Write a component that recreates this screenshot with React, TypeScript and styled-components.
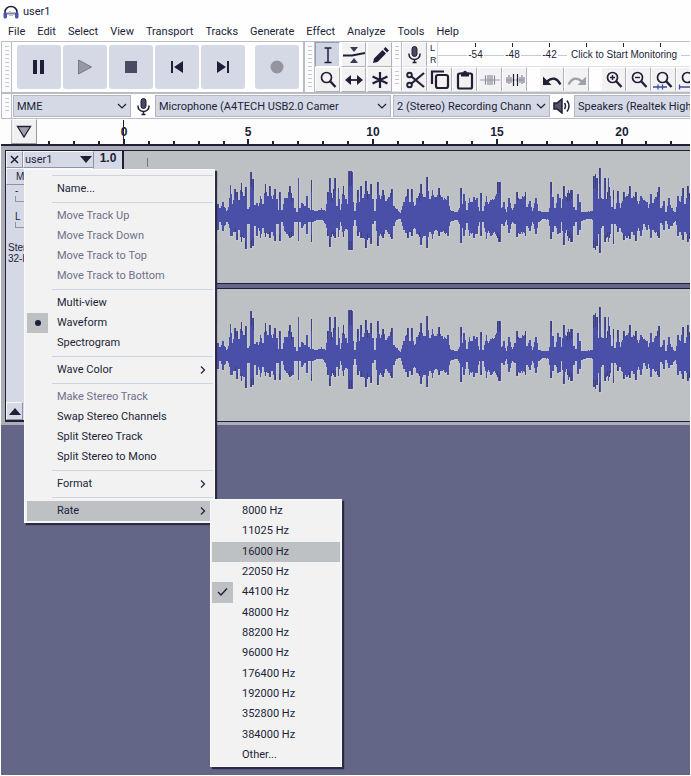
import React from "react";
import styled, { createGlobalStyle, css } from "styled-components";

const ink = "#211f38";
const slate = "#646687";
const mist = "#d5d9e6";
const line = "#b9bdc3";
const waveBlue = "#4a4fa8";
const ui = `Roboto, "Open Sans", sans-serif`;
const arial = `"Liberation Sans", Arial, sans-serif`;

const GlobalStyle = createGlobalStyle`
  * { box-sizing: border-box; }
  html, body, #root { height: 100%; }
  body { margin: 0; background: #fefefe; color: ${ink}; font: 11px/16px ${ui}; overflow: hidden; }
  button, select { font: inherit; color: inherit; margin: 0; padding: 0; border: 0; background: none; border-radius: 0; }
  svg { display: block; flex: none; }
`;

const Window = styled.div`
  position: relative;
  min-height: 100vh;
  display: flex;
  flex-direction: column;
  padding: 0 1px 1px;
  overflow: hidden;
`;

const TitleBar = styled.header`
  display: flex;
  align-items: center;
  gap: 4px;
  height: 23px;
  padding: 1px 0 0 2px;
`;

const MenuBar = styled.nav`
  display: flex;
  align-items: center;
  gap: 12px;
  height: 18px;
  padding-left: 7px;
`;

const MenuButton = styled.button`
  white-space: nowrap;
`;

const Dock = styled.div`
  display: flex;
  height: 53px;
  border-top: 1px solid ${line};
  border-bottom: 2px solid ${line};
  border-left: 1px solid ${line};
  overflow: hidden;
`;

const Grip = styled.div`
  flex: 0 0 10px;
  border-right: 1px solid ${line};
  background: repeating-linear-gradient(#c3c7d6 0 1px, #fcfcfd 1px 4px) 3px 4px / 4px calc(100% - 8px) no-repeat #fcfcfd;
`;

const Transport = styled.div`
  flex: none;
  display: flex;
  align-items: center;
  gap: 2px;
  padding: 0 4px 0 5px;
  border-right: 2px solid ${line};
`;

const TransportButton = styled.button<{ $apart?: boolean }>`
  width: 44px;
  height: 44px;
  display: grid;
  place-items: center;
  background: ${mist};
  border-radius: 3px;
  margin-left: ${(p) => (p.$apart ? 8 : 0)}px;
`;

const ToolGrid = styled.div`
  flex: none;
  display: grid;
  grid-template: 25px 25px / repeat(3, 25px);
  gap: 0 1px;
`;

const ToolButton = styled.button<{ $active?: boolean; $gap?: boolean }>`
  flex: 0 0 25px;
  height: 25px;
  display: grid;
  place-items: center;
  overflow: hidden;
  background: ${(p) => (p.$active ? "#d0d5e4" : "#f2f2f3")};
  border: 1px solid;
  border-color: ${(p) => (p.$active ? "#9a9db0 #fff #fff #9a9db0" : "#fff #aeb1b9 #aeb1b9 #fff")};
  margin-left: ${(p) => (p.$gap ? 12 : 0)}px;
`;

const RightTools = styled.div`
  flex: 1;
  min-width: 0;
  display: grid;
  grid-template-rows: 25px 25px;
`;

const ToolRow = styled.div`
  display: flex;
  min-width: 0;
  overflow: hidden;
  border-bottom: 1px solid #e0e2ea;
`;

const Channels = styled.div`
  flex: 0 0 11px;
  display: flex;
  flex-direction: column;
  justify-content: space-between;
  padding-left: 3px;
  font: 9px/12px ${arial};
  border-right: 1px solid ${mist};
`;

const Meter = styled.div`
  position: relative;
  flex: 1;
  min-width: 0;
  display: flex;
  padding-left: 19px;
  overflow: hidden;
  background: linear-gradient(#c5cad8, #c5cad8) 0 13px / 100% 1px no-repeat;
  font: 10px/12px ${arial};
`;

const MeterMark = styled.div`
  flex: 0 0 37px;
  display: flex;
  flex-direction: column;
  align-items: center;
  &::before { content: ""; width: 1px; height: 4px; background: ${ink}; margin: 1px 0 2px; }
  span { background: #fefefe; padding: 0 1px; }
`;

const MonitorButton = styled.button`
  position: absolute;
  left: 129px;
  top: 7px;
  padding: 0 4px;
  background: #fefefe;
  white-space: nowrap;
`;

const DeviceBar = styled.div`
  display: flex;
  align-items: center;
  height: 25px;
  border-left: 1px solid ${line};
  border-bottom: 1px solid ${line};
  overflow: hidden;
  ${Grip} { align-self: stretch; }
`;

const Combo = styled.label<{ $w: number }>`
  flex: 0 0 ${(p) => p.$w}px;
  display: grid;
  align-items: center;
  height: 22px;
  margin: 0 1px;
  background: ${mist};
  border: 1px solid #b2b6be;
  overflow: hidden;
  > * { grid-area: 1 / 1; }
  svg { justify-self: end; margin-right: 3px; pointer-events: none; }
`;

const ComboSelect = styled.select`
  appearance: none;
  min-width: 0;
  width: 100%;
  padding: 1px 16px 0 3px;
  line-height: 18px;
`;

const DeviceIcon = styled.div`
  flex: 0 0 22px;
  display: grid;
  place-items: center;
`;

const RulerBar = styled.div`
  display: flex;
  height: 27px;
  padding-left: 10px;
  border-bottom: 2px solid ${ink};
  overflow: hidden;
  background: #fdfdfd;
`;

const PinButton = styled.button`
  flex: 0 0 26px;
  display: grid;
  place-items: center;
  background: #f1f1f2;
  border: 1px solid;
  border-color: #fff #9a9ca5 #9a9ca5 ${line};
`;

const RulerScale = styled.svg`
  flex: 1;
  min-width: 0;
  height: 25px;
  font: bold 12px ${arial};
  text-anchor: middle;
  fill: ${ink};
`;

const Workspace = styled.main`
  flex: 1;
  background: ${slate};
`;

const Track = styled.section`
  display: flex;
  height: 279px;
  border: solid #acaeb7;
  border-width: 4px 0 3px 4px;
  box-shadow: inset 1px 1px ${ink}, inset 0 -2px ${ink};
  padding: 1px 0 2px 1px;
`;

const TrackPanel = styled.aside`
  flex: 0 0 118px;
  display: grid;
  grid-template: 17px 17px 26px 28px auto 1fr 18px / 17px 71px 1fr;
  background: ${mist};
  border-right: 2px solid ${ink};
  font: 10px/11px ${arial};
`;

const PanelButton = styled.button`
  display: flex;
  align-items: center;
  justify-content: center;
  border: 1px solid;
  border-color: #f6f7fa #8f92a6 #8f92a6 #f6f7fa;
`;

const NameButton = styled(PanelButton)`
  justify-content: space-between;
  padding: 0 1px;
  font: 11px/14px ${ui};
`;

const ScaleTop = styled.div`
  text-align: center;
  font: bold 12px/14px ${arial};
`;

const MuteButton = styled(PanelButton)`
  grid-column: 1 / 3;
  justify-content: flex-start;
  padding-left: 9px;
`;

const Gauge = styled.div`
  grid-column: 1 / -1;
  padding-left: 9px;
  &::after { content: ""; display: block; width: 60px; height: 5px; border: solid #8f92a6; border-width: 0 0 1px 1px; }
`;

const TrackInfo = styled.div`
  grid-column: 1 / -1;
  padding: 3px 0 0 2px;
`;

const CollapseButton = styled(PanelButton)`
  grid-row: 7;
`;

const WaveColumn = styled.div`
  flex: 1;
  min-width: 0;
  display: grid;
  grid-template-rows: 132px 6px 1fr;
`;

const WaveLane = styled.svg`
  width: 100%;
  height: 132px;
  background: #bdc1c4;
`;

const LaneDivider = styled.div`
  background: ${slate};
  border: solid ${ink};
  border-width: 1px 0;
`;

const popup = css`
  position: absolute;
  background: #f2f2f2;
  border: 1px solid #fafafa;
  box-shadow: 2px 2px 1px #2b2a45;
`;

const ContextMenu = styled.div`
  ${popup}
  left: 24px;
  top: 169px;
  width: 191px;
  padding: 2px 1px 1px 2px;
`;

const RateMenu = styled.div`
  ${popup}
  left: 210px;
  top: 499px;
  width: 132px;
  min-height: 268px;
  padding: 1px 1px;
  display: grid;
  grid-auto-rows: 1fr;
`;

const Item = styled.button<{ $hot?: boolean }>`
  width: 100%;
  min-height: 20px;
  display: grid;
  grid-template-columns: 21px 1fr 14px;
  column-gap: 9px;
  align-items: center;
  text-align: left;
  white-space: nowrap;
  background: ${(p) => (p.$hot ? "#bdc1c4" : "transparent")};
  &:disabled { color: #6f7089; }
`;

const Mark = styled.span<{ $on?: boolean }>`
  align-self: stretch;
  display: grid;
  place-items: center;
  background: ${(p) => (p.$on ? "#bdc1c4" : "transparent")};
`;

const Separator = styled.div`
  height: 7px;
  margin-left: 25px;
  padding-top: 3px;
  &::before { content: ""; display: block; height: 1px; background: #ced4e4; }
`;

const Chevron = ({ down = false }: { down?: boolean }) => (
  <svg width="10" height="10" viewBox="0 0 10 10" fill="none" stroke={ink} strokeWidth="1.2">
    <path d={down ? "M1 3l4 4 4-4" : "M2 1.500L5.500 5 2 8.500"} />
  </svg>
);

const Mic = ({ size = 19 }: { size?: number }) => (
  <svg width={size} height={size} viewBox="0 0 19 19" fill="none" stroke={ink} strokeWidth="1.5">
    <rect x="7" y="1.500" width="5" height="10" rx="2.5" fill="#4a4960" strokeWidth="1" />
    <path d="M4 8.500v1a5.500 5 0 0 0 11 0v-1M9.500 14.500V18M7.500 17.500h4" />
  </svg>
);

const Headphones = () => (
  <svg width="16" height="15" viewBox="0 0 16 15" fill="none">
    <path d="M2 9V7a6 5.500 0 0 1 12 0v2" stroke={ink} strokeWidth="1.600" />
    <path d="M4 8.500h8M5 7v3M7 6v5M9 7v4M11 7v3" stroke="#8a7f92" />
    <rect x="0.500" y="7" width="3.500" height="6.500" rx="1.500" fill="#4a55b5" />
    <rect x="12" y="7" width="3.500" height="6.500" rx="1.500" fill="#4a55b5" />
  </svg>
);

const Speaker = () => (
  <svg width="18" height="16" viewBox="0 0 18 16" fill="none" stroke={ink} strokeWidth="1.5">
    <path d="M1 5h3l5-4v14l-5-4H1z" fill="#55546a" />
    <path d="M11.500 5q2 3 0 6M14 2.500q4 5.500 0 11" />
  </svg>
);

const transportIcons: [string, React.ReactNode][] = [
  ["Pause", <path d="M6 5h4v14H6zM13 5h4v14h-4z" fill={ink} />],
  ["Play", <path d="M5.500 5l13 7-13 7z" fill="#9698a2" stroke="#77788a" />],
  ["Stop", <path d="M6 6h12v12H6z" fill="#4b4a63" />],
  ["Skip to Start", <path d="M6 6h2v12H6zM18 6v12L9 12z" fill={ink} />],
  ["Skip to End", <path d="M6 6v12l9-6zM16 6h2v12h-2z" fill={ink} />],
  ["Record", <circle cx="12" cy="12" r="6.500" fill="#94949e" />],
];

const Lens = ({ children }: { children?: React.ReactNode }) => (
  <g strokeWidth="1.700">
    <circle cx="9.500" cy="8.500" r="5" fill="none" />
    <path d="M13 12l5.500 6" strokeWidth="2.400" />
    {children}
  </g>
);

const toolIcons: [string, React.ReactNode][] = [
  ["Selection Tool", <path d="M7.500 4h7M11 4v14M7.500 18.500h7" strokeWidth="1.500" />],
  ["Envelope Tool", <g><path d="M0 11.500h9L22 9" strokeWidth="2" /><path d="M7 3h8l-4 5zM7 19h8l-4-5z" fill="#3c3b54" stroke="none" /></g>],
  ["Draw Tool", <path d="M4 19l1-4.500L13.500 6l3.500 3.500L8.500 18zM14.500 5l2-2 3.500 3.500-2 2z" fill={ink} stroke="none" />],
  ["Zoom Tool", <Lens />],
  ["Time Shift Tool", <g><path d="M5 11h12" strokeWidth="1.800" /><path d="M2 11l6-5v10zM20 11l-6-5v10z" fill={ink} stroke="none" /></g>],
  ["Multi-Tool", <path d="M11 3v16M3.500 7.500l15 7M18.500 7.500l-15 7" strokeWidth="2.200" />],
];

const editIcons: [string, React.ReactNode, boolean?][] = [
  ["Cut", <g strokeWidth="1.900"><circle cx="5.500" cy="6" r="2.300" /><circle cx="5.500" cy="16" r="2.300" /><path d="M7.500 7.500L20 18M7.500 14.500L20 4" strokeWidth="2.200" /></g>],
  ["Copy", <g strokeWidth="2.200"><path d="M15 2.500H3V15" /><rect x="7" y="6" width="12" height="13" rx="2" /></g>],
  ["Paste", <g strokeWidth="2.200"><rect x="4" y="4.500" width="14" height="15" rx="1.500" /><path d="M7 3.500h8v4H7z" fill={ink} stroke="none" /><circle cx="11" cy="3.500" r="1.800" fill={ink} stroke="none" /></g>],
  ["Trim Audio", <g stroke="#8b8d9e" strokeWidth="1.200"><path d="M1 11h20" stroke="#a9abb8" /><path d="M6.500 6.500v9M9 6v10M11 6v10M13 6v10M15.500 6.500v9" /></g>],
  ["Silence Audio", <g strokeWidth="1.200" stroke="#85879a"><path d="M2 11h18" stroke="#a9abb8" /><path d="M3 8v6M5 6v9M7 8v6M16 8v6M18 6v9M20 8v6" /><path d="M9.500 5v12M13.500 5v12" stroke={ink} /></g>],
  ["Undo", <g><path d="M6 12.500q8-7 13.500 3" strokeWidth="2.400" /><path d="M2 7.500V16h8.500z" fill={ink} stroke="none" /></g>, true],
  ["Redo", <g stroke="#a0a2ab"><path d="M16 12.500q-8-7-13.500 3" strokeWidth="2.400" /><path d="M20 7.500V16h-8.500z" fill="#a0a2ab" stroke="none" /></g>],
  ["Zoom In", <Lens><path d="M7 8.500h5M9.500 6v5" strokeWidth="1.400" /></Lens>, true],
  ["Zoom Out", <Lens><path d="M7 8.500h5" strokeWidth="1.400" /></Lens>],
  ["Fit Selection", <Lens><path d="M0 18h14M5 15.500v5M9.500 15.500v5" stroke="#3f4a9e" strokeWidth="1.300" /></Lens>],
  ["Fit Project", <Lens><path d="M1 18h20M1.500 15.500v5" stroke="#3f4a9e" strokeWidth="1.300" /></Lens>],
];

const ToolIcon = ({ children }: { children: React.ReactNode }) => (
  <svg width="22" height="22" viewBox="0 0 22 22" fill="none" stroke={ink} strokeWidth="2">{children}</svg>
);

const Tool = ({ name, icon, active, gap }: { name: string; icon: React.ReactNode; active?: boolean; gap?: boolean }) => (
  <ToolButton aria-label={name} $active={active} $gap={gap}><ToolIcon>{icon}</ToolIcon></ToolButton>
);

const Device = ({ label, value, w }: { label: string; value: string; w: number }) => (
  <Combo $w={w}>
    <ComboSelect aria-label={label}><option>{value}</option></ComboSelect>
    <Chevron down />
  </Combo>
);

/* Envelope samples: position in thirds of a pixel, peak above and below the centre line. */
const envelope = `0 0 0,14 6 6,18 30 27,23 12 14,28 8 6,38 14 15,48 5 6,54 9 8,60 31 20,66 12 20,74 27 16,80 24 24,86 16 14,93 33 26,100 20 22,106 29 33,
113 7 8,118 9 8,122 44 32,128 37 30,134 11 10,140 13 20,144 10 12,150 20 22,158 12 12,165 32 21,172 20 18,179 30 22,186 17 16,193 27 25,200 17 8,206 6 8,
209 24 25,214 6 6,222 18 15,230 18 18,238 30 22,247 18 20,254 8 6,260 4 6,264 38 25,268 8 6,275 13 12,283 10 8,290 20 18,296 8 6,300 6 6,303 36 26,307 6 6,
320 5 4,333 8 4,345 5 8,352 24 20,359 38 31,366 18 18,373 38 22,379 10 12,384 28 21,390 6 6,399 30 21,406 17 13,411 12 14,414 45 34,418 45 34,422 45 34,425 44 34,428 14 10,
434 5 4,443 26 20,447 14 16,451 30 22,458 18 22,467 35 32,475 22 22,482 32 28,488 17 8,494 5 5,502 34 30,510 17 18,518 26 22,526 15 14,535 19 18,545 27 23,
551 10 10,560 7 4,570 3 3,580 14 14,592 27 22,598 14 16,604 27 20,612 10 12,620 18 18,632 32 29,640 19 20,646 19 20,650 39 32,658 17 16,666 26 23,675 19 14,
685 28 20,695 19 16,705 17 18,712 20 20,720 6 6,740 4 4,747 8 8,752 28 27,756 12 12,761 22 20,770 6 7,777 18 20,783 14 18,790 19 22,800 18 18,807 5 6,
812 23 20,817 5 6,828 20 23,834 12 15,842 16 20,855 20 18,860 22 20,862 34 22,866 34 26,870 34 26,873 8 8,880 14 10,888 4 4,896 18 17,906 6 6,914 12 8,920 24 21,
928 17 18,936 20 18,945 24 20,950 9 10,959 15 15,966 5 6,976 18 18,986 5 6,1000 4 3,1016 4 4,1019 8 10,1022 34 23,1028 19 16,1034 8 10,1042 22 18,
1048 18 17,1052 8 6,1060 30 29,1068 19 14,1074 26 25,1085 26 26,1090 9 10,1096 6 6,1103 22 19,1109 14 14,1112 4 5,1140 5 3,1148 5 4,1151 40 32,
1155 42 34,1159 38 30,1162 17 18,1168 48 37,1173 18 12,1178 17 10,1183 38 26,1188 17 22,1194 38 26,1200 20 18,1204 9 8,1209 26 28,1214 7 8,1223 25 16,
1230 8 12,1240 24 24,1250 20 22,1258 30 23,1265 18 16,1276 24 25,1284 12 12,1292 20 20,1300 16 8,1310 14 14,1314 8 9,1321 22 22,1327 13 14,1335 19 17,
1346 29 22,1352 8 7,1360 15 14,1366 4 5,1376 18 13,1384 8 10,1395 4 5,1403 20 20,1410 14 16,1417 28 24,1424 12 16,1433 30 26,1440 24 26`
  .split(",")
  .map((s) => s.trim().split(" ").map(Number));

/* One column per pixel: a peak keeps its full height, the columns between peaks fall back to the body. */
const columns = Array.from({ length: 480 }, (_, px) => {
  const t = px * 3;
  const near = envelope.filter(([p]) => Math.abs(p - t) <= 2);
  const i = Math.max(1, envelope.findIndex(([p]) => p >= t));
  const [a, b] = [envelope[i - 1], envelope[i]];
  const k = Math.min(1, Math.max(0, (t - a[0]) / (b[0] - a[0])));
  const value = (n: number) =>
    near.length
      ? Math.max(...near.map((s) => s[n]))
      : Math.round((a[n] + (b[n] - a[n]) * k) * (px % 3 ? 0.88 : 1));
  return [px, value(1), value(2)];
});

const wavePath = (mid: number) =>
  columns.map(([px, up, down]) => `M${86 + px} ${mid - up}h1V${mid + down}h-1z`).join("");

const edgePath = (mid: number) =>
  columns
    .filter(([px, up]) => up > 22 && px % 2)
    .map(([px, up, down]) => `M${86 + px} ${mid - up}h1v${Math.round(up / 3)}h-1zM${86 + px} ${mid + down}h1v-${Math.round(down / 4)}h-1z`)
    .join("");

const Lane = ({ mid, label }: { mid: number; label: string }) => (
  <WaveLane role="img" aria-label={label} shapeRendering="crispEdges">
    <path d={wavePath(mid)} fill="none" stroke="#d0d3da" strokeWidth="1" opacity="0.5" />
    <path d={wavePath(mid)} fill={waveBlue} />
    <path d={edgePath(mid)} fill="#3a3963" opacity="0.7" />
    {mid < 66 && <path d="M23.500 7v9" stroke="#74768c" />}
  </WaveLane>
);

const Dot = () => <svg width="6" height="6"><circle cx="3" cy="3" r="3" fill={ink} /></svg>;
const Check = () => (
  <svg width="11" height="10" viewBox="0 0 11 10" fill="none" stroke={ink} strokeWidth="1.4"><path d="M1 5l3 3 6-6.500" /></svg>
);

type Entry = { text: string; off?: boolean; sub?: boolean; on?: boolean; hot?: boolean };
const trackMenu: Entry[][] = [
  [{ text: "Name..." }],
  ["Move Track Up", "Move Track Down", "Move Track to Top", "Move Track to Bottom"].map((text) => ({ text, off: true })),
  [{ text: "Multi-view" }, { text: "Waveform", on: true }, { text: "Spectrogram" }],
  [{ text: "Wave Color", sub: true }],
  [{ text: "Make Stereo Track", off: true }, { text: "Swap Stereo Channels" }, { text: "Split Stereo Track" }, { text: "Split Stereo to Mono" }],
  [{ text: "Format", sub: true }],
  [{ text: "Rate", sub: true, hot: true }],
];

const rates = [8000, 11025, 16000, 22050, 44100, 48000, 88200, 96000, 176400, 192000, 352800, 384000].map((r) => `${r} Hz`);

const MenuItem = ({ text, off, sub, on, hot, mark }: Entry & { mark?: React.ReactNode }) => (
  <Item role="menuitem" disabled={off} $hot={hot} aria-haspopup={sub ? "menu" : undefined}>
    <Mark $on={on}>{on && (mark ?? <Dot />)}</Mark>
    <span>{text}</span>
    {sub && <Chevron />}
  </Item>
);

const seconds = Array.from({ length: 26 }, (_, i) => i - 3);

export default function App() {
  return (
    <Window>
      <GlobalStyle />
      <TitleBar><Headphones /><span>user1</span></TitleBar>
      <MenuBar>
        {["File", "Edit", "Select", "View", "Transport", "Tracks", "Generate", "Effect", "Analyze", "Tools", "Help"].map((m) => (
          <MenuButton key={m}>{m}</MenuButton>
        ))}
      </MenuBar>
      <Dock>
        <Grip />
        <Transport>
          {transportIcons.map(([name, icon]) => (
            <TransportButton key={name} aria-label={name} $apart={name === "Record"}>
              <svg width="24" height="24" viewBox="0 0 24 24">{icon}</svg>
            </TransportButton>
          ))}
        </Transport>
        <Grip />
        <ToolGrid>
          {toolIcons.map(([name, icon], i) => <Tool key={name} name={name} icon={icon} active={i === 0} />)}
        </ToolGrid>
        <RightTools>
          <ToolRow>
            <Grip />
            <ToolButton aria-label="Record Meter"><Mic /></ToolButton>
            <Channels><span>L</span><span>R</span></Channels>
            <Meter>
              {["-54", "-48", "-42", "", "", ""].map((v, i) => <MeterMark key={i}>{v && <span>{v}</span>}</MeterMark>)}
              <MonitorButton>Click to Start Monitoring</MonitorButton>
            </Meter>
          </ToolRow>
          <ToolRow>
            <Grip />
            {editIcons.map(([name, icon, gap]) => <Tool key={name} name={name} icon={icon} gap={gap} />)}
          </ToolRow>
        </RightTools>
      </Dock>
      <DeviceBar>
        <Grip />
        <Device label="Audio Host" value="MME" w={118} />
        <DeviceIcon><Mic /></DeviceIcon>
        <Device label="Recording Device" value="Microphone (A4TECH USB2.0 Camer" w={236} />
        <Device label="Recording Channels" value="2 (Stereo) Recording Chann" w={157} />
        <DeviceIcon><Speaker /></DeviceIcon>
        <Device label="Playback Device" value="Speakers (Realtek High" w={236} />
      </DeviceBar>
      <RulerBar>
        <PinButton aria-label="Pinned Play Head">
          <svg width="16" height="14" viewBox="0 0 16 14"><path d="M1.500 1.500h13L8 12z" fill="#9fa0a6" stroke={ink} strokeWidth="1.300" /></svg>
        </PinButton>
        <RulerScale>
          {seconds.map((s) => {
            const x = Math.round(87 + s * 24.88);
            const major = s >= 0 && s % 5 === 0;
            return (
              <g key={s}>
                <rect x={x - 1} y={major ? 20 : 22} width="2" height="5" />
                {major && <text x={x} y="17">{s}</text>}
              </g>
            );
          })}
          <rect x="86" y="1" width="1" height="24" />
        </RulerScale>
      </RulerBar>
      <Workspace>
        <Track>
          <TrackPanel>
            <PanelButton aria-label="Close track">
              <svg width="9" height="9" viewBox="0 0 9 9" stroke={ink} strokeWidth="1.500"><path d="M1 1l7 7M8 1L1 8" /></svg>
            </PanelButton>
            <NameButton aria-haspopup="menu">
              user1
              <svg width="12" height="7" viewBox="0 0 12 7"><path d="M0 0h12L6 7z" fill={ink} /></svg>
            </NameButton>
            <ScaleTop>1.0</ScaleTop>
            <MuteButton>Mute</MuteButton>
            <Gauge>-</Gauge>
            <Gauge>L</Gauge>
            <TrackInfo>Stereo<br />32-bit float</TrackInfo>
            <CollapseButton aria-label="Collapse track">
              <svg width="12" height="7" viewBox="0 0 12 7"><path d="M0 7h12L6 0z" fill={ink} /></svg>
            </CollapseButton>
          </TrackPanel>
          <WaveColumn>
            <Lane mid={65} label="Left channel" />
            <LaneDivider />
            <Lane mid={66} label="Right channel" />
          </WaveColumn>
        </Track>
      </Workspace>
      <ContextMenu role="menu">
        {trackMenu.map((group, i) => (
          <React.Fragment key={i}>
            <Separator role="separator" />
            {group.map((e) => <MenuItem key={e.text} {...e} />)}
          </React.Fragment>
        ))}
      </ContextMenu>
      <RateMenu role="menu">
        {rates.map((r) => <MenuItem key={r} text={r} hot={r === "16000 Hz"} on={r === "44100 Hz"} mark={<Check />} />)}
        <MenuItem text="Other..." />
      </RateMenu>
    </Window>
  );
}
